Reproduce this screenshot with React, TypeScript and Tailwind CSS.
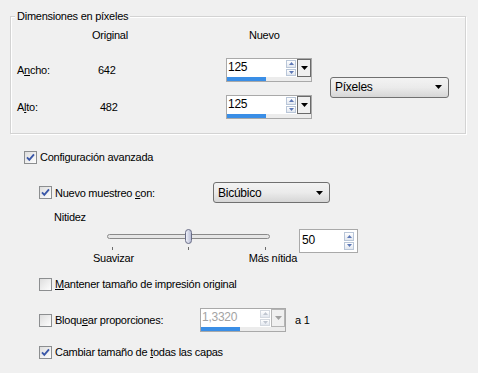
import React from "react";

const Tri = ({ color = "#000", w = 7, h = 4, up = false }: { color?: string; w?: number; h?: number; up?: boolean }) => (
  <svg width={w} height={h} viewBox={`0 0 ${w} ${h}`} className="block">
    <polygon points={up ? `0,${h} ${w},${h} ${w / 2},0` : `0,0 ${w},0 ${w / 2},${h}`} fill={color} />
  </svg>
);

const SpinBtn = ({ up, disabled }: { up?: boolean; disabled?: boolean }) => (
  <div
    className={`flex-1 flex items-center justify-center border ${
      disabled ? "border-[#d4d9e0]" : "border-[#b9c6d8]"
    } bg-gradient-to-b from-white to-[#e2e7ef]`}
  >
    <Tri up={up} w={5} h={3} color={disabled ? "#c0c6d0" : "#5d78b6"} />
  </div>
);

const SpinButtons = ({ disabled }: { disabled?: boolean }) => (
  <div className="flex flex-col gap-px w-[10px] py-px">
    <SpinBtn up disabled={disabled} />
    <SpinBtn disabled={disabled} />
  </div>
);

const SpinCombo = ({ value, disabled }: { value: string; disabled?: boolean }) => (
  <div className="flex flex-col w-[86px] h-[24px] border border-[#a9a9a9] bg-white">
    <div className="flex h-[18px]">
      <div className={`flex-1 pl-[1px] leading-[16px] text-[12px] ${disabled ? "text-[#a3a3a3]" : "text-black"}`}>{value}</div>
      <SpinButtons disabled={disabled} />
      <div
        className={`ml-px w-[14px] h-[18px] flex items-center justify-center border ${
          disabled ? "border-[#b5b5b5]" : "border-[#6a6a6a]"
        } bg-[#f0f0f0]`}
      >
        <Tri w={7} h={4} color={disabled ? "#a0a0a0" : "#000"} />
      </div>
    </div>
    <div className="flex-1 bg-[#ececec] flex">
      <div className="w-[39px] h-full bg-[#3a8ee6]" />
    </div>
  </div>
);

const Spin = ({ value }: { value: string }) => (
  <div className="flex w-[59px] h-[24px] border border-[#a9a9a9] bg-white pr-[3px]">
    <div className="flex-1 pl-[2px] pt-[2px] text-[12px] leading-[16px]">{value}</div>
    <div className="flex flex-col gap-px w-[10px] py-[2px]">
      <SpinBtn up />
      <SpinBtn />
    </div>
  </div>
);

const Combo = ({ label, w }: { label: string; w: string }) => (
  <div
    className={`${w} h-[21px] flex items-center justify-between rounded-[3px] border border-[#707070] bg-gradient-to-b from-[#f3f3f3] via-[#ebebeb] to-[#d6d6d6] pl-[4px] pr-[6px]`}
  >
    <span className="text-[12px]">{label}</span>
    <Tri w={7} h={4} />
  </div>
);

const Check = ({ checked }: { checked?: boolean }) => (
  <svg width="13" height="13" viewBox="0 0 13 13" className="block shrink-0">
    <defs>
      <linearGradient id="cbg" x1="0" y1="0" x2="1" y2="1">
        <stop offset="0" stopColor="#dcdcdc" />
        <stop offset="1" stopColor="#ffffff" />
      </linearGradient>
    </defs>
    <rect x="0.5" y="0.5" width="12" height="12" fill="url(#cbg)" stroke="#8c8e90" />
    {checked && (
      <path d="M3 6.3 L5.3 8.8 L10 3.4" fill="none" stroke="#3a57a8" strokeWidth="1.9" />
    )}
  </svg>
);

const CheckRow = ({ checked, children, className = "" }: { checked?: boolean; children: React.ReactNode; className?: string }) => (
  <div className={`flex items-center gap-[3px] ${className}`}>
    <Check checked={checked} />
    <span>{children}</span>
  </div>
);

export default function App() {
  return (
    <div className="w-[478px] h-[373px] bg-[#f0f0f0] text-black font-['Liberation_Sans',Arial,sans-serif] text-[11px] leading-[14px] tracking-[-0.25px] flex flex-col pt-[16px] overflow-hidden">
      {/* Group box */}
      <div className="relative ml-[10px] w-[456px] h-[118px] border border-[#d3d3d3] shadow-[inset_1px_1px_0_#fff,1px_1px_0_#fff] pl-[6px]">
        <div className="absolute left-[4px] top-[-8px] px-[2px] bg-[#f0f0f0]">Dimensiones en píxeles</div>
        <div className="grid grid-cols-[81px_128px_85px_auto] mt-[11px]">
          <div className="h-[14px]" />
          <div className="-ml-[6px]">Original</div>
          <div className="ml-[23px]">Nuevo</div>
          <div />
        </div>
        <div className="grid grid-cols-[81px_128px_86px_auto] grid-rows-[24px_24px] gap-y-[13px] mt-[16px]">
          <div className="self-center">
            A<u>n</u>cho:
          </div>
          <div className="self-center">642</div>
          <SpinCombo value="125" />
          <div className="row-span-2 self-center ml-[18px] mb-[3px]">
            <Combo label="Píxeles" w="w-[119px]" />
          </div>
          <div className="self-center">
            A<u>l</u>to:
          </div>
          <div className="self-center ml-[2px]">482</div>
          <SpinCombo value="125" />
        </div>
      </div>

      {/* Configuración avanzada */}
      <CheckRow checked className="mt-[16px] ml-[24px] h-[14px]">
        Configuración avanzada
      </CheckRow>

      {/* Nuevo muestreo */}
      <div className="flex items-center mt-[18px] ml-[39px] h-[21px]">
        <div className="w-[174px]">
          <CheckRow checked>
            Nuevo muestreo <u>c</u>on:
          </CheckRow>
        </div>
        <Combo label="Bicúbico" w="w-[117px]" />
      </div>

      {/* Nitidez */}
      <div className="mt-[7px] ml-[54px] h-[14px]">Nitidez</div>

      {/* Slider */}
      <div className="flex mt-[4px] ml-[93px]">
        <div className="flex flex-col w-[204px]">
          <div className="pl-[14px] h-[17px]">
            <div className="relative w-[163px] h-[17px]">
              <div className="absolute left-0 top-[6px] w-[163px] h-[5px] rounded-full border border-[#8a8a8a] bg-[#e6e6e6]" />
              <div className="absolute left-[78px] top-[1px] w-[7px] h-[15px] rounded-full border border-[#686c86] bg-gradient-to-r from-[#eef0f8] to-[#b9bed6]" />
            </div>
          </div>
          <div className="pl-[14px] h-[6px]">
            <div className="relative w-[163px] h-[6px]">
              <div className="absolute left-[5px] top-[2px] w-px h-[3px] bg-[#6b6b6b]" />
              <div className="absolute left-[81px] top-[2px] w-px h-[3px] bg-[#6b6b6b]" />
              <div className="absolute left-[158px] top-[2px] w-px h-[3px] bg-[#6b6b6b]" />
            </div>
          </div>
          <div className="flex justify-between h-[14px]">
            <span>Suavizar</span>
            <span>Más nítida</span>
          </div>
        </div>
        <div className="ml-[2px] mt-[1px]">
          <Spin value="50" />
        </div>
      </div>

      {/* Mantener */}
      <CheckRow className="mt-[12px] ml-[39px] h-[14px]">
        <u>M</u>antener tamaño de impresión original
      </CheckRow>

      {/* Bloquear */}
      <div className="flex items-center mt-[17px] ml-[39px] h-[24px]">
        <div className="w-[161px]">
          <CheckRow>
            Bloqu<u>e</u>ar proporciones:
          </CheckRow>
        </div>
        <SpinCombo value="1,3320" disabled />
        <span className="ml-[9px]">a 1</span>
      </div>

      {/* Cambiar */}
      <CheckRow checked className="mt-[13px] ml-[39px] h-[14px]">
        Cambiar tamaño de <u>t</u>odas las capas
      </CheckRow>
    </div>
  );
}
